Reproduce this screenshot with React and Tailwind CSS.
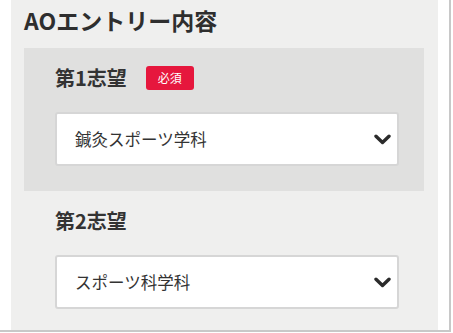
import React from "react";

const font = { fontFamily: '"Noto Sans CJK JP", "Noto Sans", sans-serif' };

function Chevron() {
  return (
    <svg width="17" height="11" viewBox="0 0 17 11" className="shrink-0">
      <path d="M2 2.2 L8.5 8.5 L15 2.2" fill="none" stroke="#2b2b2b" strokeWidth="3.4" strokeLinecap="round" strokeLinejoin="round" />
    </svg>
  );
}

function Select({ value }) {
  return (
    <div className="h-[54px] w-[344px] bg-white border-2 border-[#d6d6d6] rounded-[3px] flex items-center justify-between pl-[18px] pr-[6px]">
      <span className="text-[16.5px] text-[#333]">{value}</span>
      <Chevron />
    </div>
  );
}

function Choice({ label, required, value, shaded }) {
  return (
    <div className={`pl-[31px] pt-[17px] pb-[25px] ${shaded ? "bg-[#e0e0df]" : ""}`}>
      <div className="flex items-center gap-[19px] h-[26px]">
        <span className="text-[20px] font-bold text-[#333]">{label}</span>
        {required && (
          <span className="bg-[#e6173d] text-white text-[12px] rounded-[3px] w-[48px] h-[24px] flex items-center justify-center">
            必須
          </span>
        )}
      </div>
      <div className="mt-[21px]">
        <Select value={value} />
      </div>
    </div>
  );
}

export default function App() {
  return (
    <div className="w-[453px] h-[333px] bg-white" style={font}>
      <div className="w-[451px] h-[332px] border-r-2 border-b-2 border-[#c8c8c8] pl-[11px]">
        <div className="w-[427px] h-full bg-[#efefee] px-[13px]">
          <h2 className="text-[23px] font-bold text-[#2e2e2e] leading-none pt-[9px] h-[48px]">AOエントリー内容</h2>
          <div className="w-[400px]">
            <Choice label="第1志望" required value="鍼灸スポーツ学科" shaded />
            <Choice label="第2志望" value="スポーツ科学科" />
          </div>
        </div>
      </div>
    </div>
  );
}
